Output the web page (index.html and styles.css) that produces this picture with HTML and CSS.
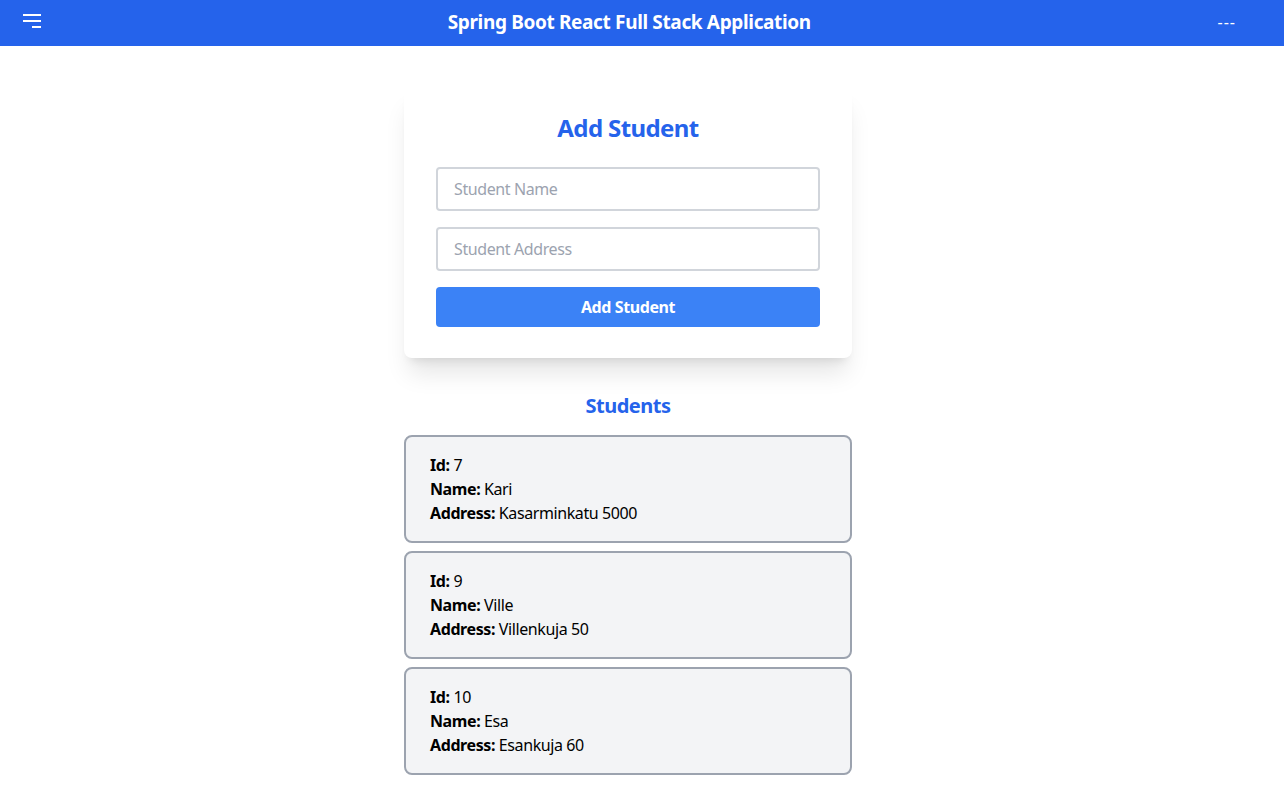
FILE: index.html
```html
<!DOCTYPE html>
<html lang="en">
<head>
<meta charset="utf-8">
<title>Spring Boot React Full Stack Application</title>
<link rel="stylesheet" href="styles.css">
</head>
<body>
<header class="topbar">
  <button class="menu-btn" aria-label="Menu">
    <svg width="18" height="14" viewBox="0 0 18 14" aria-hidden="true">
      <rect x="0" y="0" width="18" height="2" fill="#fff"/>
      <rect x="0" y="6" width="18" height="2" fill="#fff"/>
      <rect x="9" y="12" width="9" height="2" fill="#fff"/>
    </svg>
  </button>
  <h1 class="app-title">Spring Boot React Full Stack Application</h1>
  <span class="user-slot">---</span>
</header>

<main class="content">
  <section class="form-card">
    <h2 class="form-title">Add Student</h2>
    <form class="student-form">
      <input class="field" type="text" placeholder="Student Name">
      <input class="field" type="text" placeholder="Student Address">
      <button class="submit-btn" type="button">Add Student</button>
    </form>
  </section>

  <section class="students">
    <h3 class="students-title">Students</h3>
    <div class="student-card">
      <p><b>Id:</b> 7</p>
      <p><b>Name:</b> Kari</p>
      <p><b>Address:</b> Kasarminkatu 5000</p>
    </div>
    <div class="student-card">
      <p><b>Id:</b> 9</p>
      <p><b>Name:</b> Ville</p>
      <p><b>Address:</b> Villenkuja 50</p>
    </div>
    <div class="student-card">
      <p><b>Id:</b> 10</p>
      <p><b>Name:</b> Esa</p>
      <p><b>Address:</b> Esankuja 60</p>
    </div>
  </section>
</main>
</body>
</html>
```

FILE: styles.css
```css
* { box-sizing: border-box; }

html, body {
  margin: 0;
  padding: 0;
  background: #ffffff;
  font-family: "Noto Sans", "Open Sans", sans-serif;
  color: #000;
}

.topbar {
  height: 46px;
  background: #2563eb;
  display: flex;
  align-items: center;
  justify-content: space-between;
  padding: 0 48px 0 23px;
  color: #fff;
}

.menu-btn {
  background: none;
  border: 0;
  padding: 0;
  margin-top: -4px;
  display: flex;
  cursor: pointer;
}

.app-title {
  margin: 0;
  font-size: 19px;
  font-weight: 700;
  line-height: 28px;
  letter-spacing: -0.35px;
  margin-top: -2px;
}

.user-slot {
  font-size: 16px;
  line-height: 24px;
  letter-spacing: 1px;
  margin-top: -2px;
}

.content {
  display: flex;
  flex-direction: column;
  align-items: center;
  padding: 40px 28px 0 0;
}

.form-card {
  width: 448px;
  background: #fff;
  border-radius: 8px;
  box-shadow: 0 20px 25px -5px rgba(0,0,0,0.1), 0 8px 10px -6px rgba(0,0,0,0.1);
  padding: 26px 32px 31px;
}

.form-title {
  margin: 0 0 23px;
  text-align: center;
  color: #2563eb;
  font-size: 24px;
  line-height: 32px;
  font-weight: 700;
  letter-spacing: -0.6px;
}

.student-form {
  display: flex;
  flex-direction: column;
  gap: 16px;
}

.field {
  height: 44px;
  border: 2px solid #d1d5db;
  border-radius: 4px;
  padding: 0 16px;
  font-family: inherit;
  font-size: 16px;
  letter-spacing: -0.4px;
  color: #111827;
  outline: none;
}

.field::placeholder { color: #9ca3af; }

.submit-btn {
  height: 40px;
  border: 0;
  border-radius: 4px;
  background: #3b82f6;
  color: #fff;
  font-family: inherit;
  font-weight: 700;
  font-size: 16px;
  letter-spacing: -0.4px;
  cursor: pointer;
}

.students {
  width: 448px;
  margin-top: 34px;
}

.students-title {
  margin: 0 0 15px;
  text-align: center;
  color: #2563eb;
  font-size: 20px;
  line-height: 28px;
  font-weight: 700;
  letter-spacing: -0.5px;
}

.student-card {
  background: #f3f4f6;
  border: 2px solid #9ca3af;
  border-radius: 8px;
  padding: 16px 24px;
  margin-bottom: 8px;
}

.student-card p {
  margin: 0;
  font-size: 16px;
  line-height: 24px;
  letter-spacing: -0.4px;
}

.student-card b { font-weight: 700; }
```
